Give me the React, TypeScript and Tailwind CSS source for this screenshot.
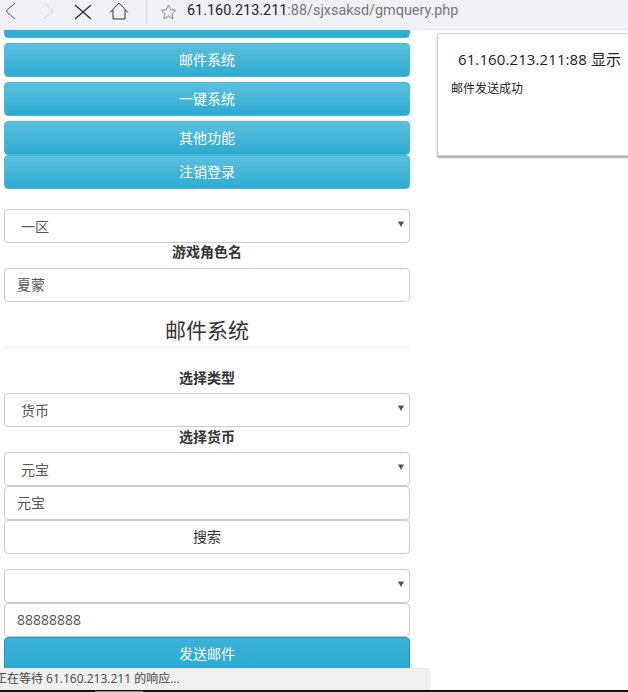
import React from "react";

const cjk = "font-['Open_Sans','Noto_Sans_CJK_SC',sans-serif]";

const BlueButton = ({ label, className = "" }: { label: string; className?: string }) => (
  <button className={`block w-full h-[34px] rounded-[4px] border border-[#46b8da] bg-gradient-to-b from-[#5bc0de] to-[#2aabd2] text-white text-sm ${className}`}>
    {label}
  </button>
);

const SelectBox = ({ value }: { value: string }) => (
  <div className="flex items-center justify-between h-[34px] rounded-[4px] border border-[#ccc] bg-white pl-4 pr-[5px] text-sm text-[#555]">
    <span className="pt-px">{value}</span>
    <svg width="6" height="6" viewBox="0 0 6 6" className="mb-1">
      <path d="M0 0.5h6L3 6z" fill="#555" />
    </svg>
  </div>
);

const TextBox = ({ value }: { value: string }) => (
  <div className="flex items-center h-[34px] rounded-[4px] border border-[#ccc] bg-white px-3 text-sm text-[#555]">
    {value}
  </div>
);

const Label = ({ text, className = "" }: { text: string; className?: string }) => (
  <div className={`text-center text-sm font-bold text-[#333] leading-4 ${className}`}>{text}</div>
);

export default function App() {
  return (
    <div className={`relative h-[692px] w-[628px] overflow-hidden bg-white ${cjk}`}>
      {/* browser toolbar */}
      <div className="relative z-10 flex h-[30px] items-start bg-[#f0f0f5] border-b border-[#e8e8ec]">
        <svg width="12" height="18" viewBox="0 0 12 18" className="ml-1 mt-[2px]" fill="none" stroke="#555" strokeWidth="1">
          <path d="M11 1 2 9l9 8" />
        </svg>
        <svg width="12" height="18" viewBox="0 0 12 18" className="ml-[26px] mt-[2px]" fill="none" stroke="#d8d8dc" strokeWidth="1">
          <path d="M2 1l9 8-9 8" />
        </svg>
        <svg width="18" height="16" viewBox="0 0 18 16" className="ml-5 mt-1" fill="none" stroke="#222" strokeWidth="1.1">
          <path d="M1 1l16 14M17 1 1 15" />
        </svg>
        <svg width="20" height="18" viewBox="0 0 20 18" className="ml-[17px] mt-[2px]" fill="none" stroke="#333" strokeWidth="1">
          <path d="M1 10.500 10 1l9 9.500M4 8v9h12V8" />
        </svg>
        <div className="ml-[17px] h-[24px] w-px bg-[#dcdce0]" />
        <svg width="17" height="16" viewBox="0 0 17 16" className="ml-[13px] mt-1" fill="none" stroke="#8a8a8a" strokeWidth="1">
          <path d="M8.500 1l2.200 4.700 5 .6-3.700 3.400 1 5-4.500-2.500L4 14.700l1-5L1.300 6.300l5-.6z" />
        </svg>
        <div className="ml-[10px] mt-px font-['Roboto',sans-serif] text-[14.400px] leading-5 whitespace-nowrap text-[#777]">
          <span className="text-[#222]">61.160.213.211</span>:88/sjxsaksd/gmquery.php
        </div>
      </div>

      {/* page content */}
      <div className="ml-1 w-[406px] -mt-[26px]">
        <BlueButton label="" />
        <BlueButton label="邮件系统" className="mt-[5px]" />
        <BlueButton label="一键系统" className="mt-[5px]" />
        <BlueButton label="其他功能" className="mt-[5px]" />
        <BlueButton label="注销登录" />

        <div className="mt-5">
          <SelectBox value="一区" />
        </div>
        <Label text="游戏角色名" className="mt-px" />
        <div className="mt-2">
          <TextBox value="夏蒙" />
        </div>

        <h2 className="mt-[13px] border-b border-[#eee] pb-[2px] text-center text-[21px] leading-[30px] text-[#333]">
          邮件系统
        </h2>

        <Label text="选择类型" className="mt-[22px]" />
        <div className="mt-[7px]">
          <SelectBox value="货币" />
        </div>
        <Label text="选择货币" className="mt-[2px]" />
        <div className="mt-[7px]">
          <SelectBox value="元宝" />
        </div>
        <TextBox value="元宝" />
        <div className="flex h-[34px] items-center justify-center rounded-[4px] border border-[#ccc] bg-white text-sm text-[#333]">
          搜索
        </div>

        <div className="mt-[15px]">
          <SelectBox value="" />
        </div>
        <TextBox value="88888888" />
        <button className="block h-[34px] w-full rounded-[4px] border border-[#2e8fc4] bg-gradient-to-b from-[#3cb2d8] to-[#2aabd2] text-sm text-white">
          发送邮件
        </button>
      </div>

      {/* alert dialog */}
      <div className="absolute left-[437px] top-[33px] h-[123px] w-[200px] rounded-l-[2px] border border-[#d0d0d0] bg-white shadow-[0_2px_2px_rgba(0,0,0,0.35)]">
        <div className="pl-5 pt-[13px] text-[15px] tracking-[0.1px] leading-6 whitespace-nowrap text-[#222]">61.160.213.211:88 显示</div>
        <div className="pl-[13px] pt-[10px] text-xs leading-4 text-[#222]">邮件发送成功</div>
      </div>

      {/* status bubble */}
      <div className="absolute bottom-[2px] left-0 flex h-[22px] w-[430px] items-center rounded-tr-[4px] border-r border-t border-[#e8e8e8] bg-[#f0f0f0] pb-[2px] text-xs whitespace-nowrap text-[#444]">
        <span className="-ml-[5px]">正在等待 61.160.213.211 的响应...</span>
      </div>
      <div className="absolute bottom-0 left-0 h-[2px] w-full bg-[#111]" />
      <div className="absolute bottom-0 left-[95px] h-px w-[48px] bg-[#888]" />
    </div>
  );
}
